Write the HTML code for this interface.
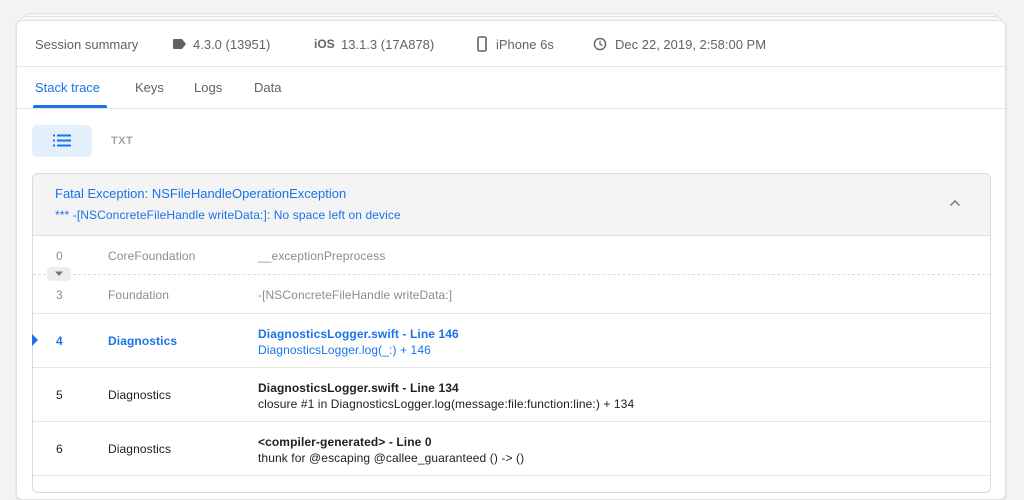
<!DOCTYPE html>
<html><head><style>
*{margin:0;padding:0;box-sizing:border-box}
body{width:1024px;height:485px;overflow:hidden;background:#f1f3f4;font-family:"Liberation Sans",sans-serif;position:relative}
.a{position:absolute;white-space:nowrap}
.card{position:absolute;left:16px;top:20px;width:990px;height:480px;background:#fff;border:1px solid #e0e0e0;border-radius:6px;box-shadow:0 1px 2px rgba(0,0,0,.12)}
.stk{position:absolute;border:1px solid #e2e2e2;border-bottom:none;border-radius:6px 6px 0 0;background:#f8f8f8}
.hd{font-size:13px;color:#5f6368;top:37px}
.tab{font-size:13px;top:80px;color:#5f6368}
.r{font-size:12px;color:#202124;letter-spacing:0.1px}
.g{color:#8a8d91}
.b{font-weight:bold}
.bl{color:#1a73e8}
.hl{position:absolute;left:33px;width:957px;height:1px;background:#e6e6e6}
</style></head><body>
<div class="stk" style="left:24px;top:13px;width:974px;height:10px"></div>
<div class="stk" style="left:20px;top:16px;width:982px;height:10px"></div>
<div class="card"></div>
<div class="a hd" style="left:35px">Session summary</div>
<svg class="a" style="left:173px;top:39px" width="14" height="10"><path d="M0 1a1 1 0 0 1 1-1h8l4 5-4 5H1a1 1 0 0 1-1-1z" fill="#5f6368"/></svg>
<div class="a hd" style="left:193px">4.3.0 (13951)</div>
<div class="a hd" style="left:314px;font-weight:bold;font-size:12px;top:37px;letter-spacing:0">iOS</div>
<div class="a hd" style="left:341px">13.1.3 (17A878)</div>
<svg class="a" style="left:477px;top:36px" width="10" height="16"><rect x="1" y="1" width="8" height="14" rx="1.5" fill="none" stroke="#5f6368" stroke-width="1.6"/></svg>
<div class="a hd" style="left:496px">iPhone 6s</div>
<svg class="a" style="left:593px;top:37px" width="14" height="14"><circle cx="7" cy="7" r="5.6" fill="none" stroke="#5f6368" stroke-width="1.4"/><path d="M7 3.8V7l2.3 1.6" fill="none" stroke="#5f6368" stroke-width="1.3"/></svg>
<div class="a hd" style="left:615px">Dec 22, 2019, 2:58:00 PM</div>
<div class="a" style="left:17px;top:66px;width:988px;height:1px;background:#e6e6e6"></div>
<div class="a tab" style="left:35px;color:#1a73e8">Stack trace</div>
<div class="a tab" style="left:135px">Keys</div>
<div class="a tab" style="left:194px">Logs</div>
<div class="a tab" style="left:254px">Data</div>
<div class="a" style="left:33px;top:105px;width:74px;height:3px;background:#1a73e8;border-radius:2px 2px 0 0"></div>
<div class="a" style="left:17px;top:108px;width:988px;height:1px;background:#e6e6e6"></div>
<div class="a" style="left:32px;top:125px;width:60px;height:32px;background:#e3f0fc;border-radius:5px"></div>
<svg class="a" style="left:53px;top:134px" width="18" height="14"><g fill="#1a73e8"><rect x="0" y="0.5" width="2" height="2"/><rect x="4" y="0.5" width="14" height="2"/><rect x="0" y="5.5" width="2" height="2"/><rect x="4" y="5.5" width="14" height="2"/><rect x="0" y="10.5" width="2" height="2"/><rect x="4" y="10.5" width="14" height="2"/></g></svg>
<div class="a" style="left:111px;top:135px;font-size:11px;font-weight:bold;color:#a0a3a6;letter-spacing:.5px">TXT</div>
<div class="a" style="left:32px;top:173px;width:959px;height:320px;border:1px solid #dadada;border-radius:6px;background:#fff"></div>
<div class="a" style="left:33px;top:174px;width:957px;height:62px;background:#f4f4f4;border-radius:5px 5px 0 0;border-bottom:1px solid #e0e0e0"></div>
<div class="a" style="left:55px;top:186px;font-size:13px;color:#1a73e8">Fatal Exception: NSFileHandleOperationException</div>
<div class="a" style="left:55px;top:208px;font-size:12px;color:#1a73e8;letter-spacing:.1px">*** -[NSConcreteFileHandle writeData:]: No space left on device</div>
<svg class="a" style="left:949px;top:199px" width="12" height="8"><path d="M1.5 6.5l4.5-4.5 4.5 4.5" fill="none" stroke="#80868b" stroke-width="1.6"/></svg>
<div class="a r g" style="left:56px;top:249px">0</div>
<div class="a r g" style="left:108px;top:249px">CoreFoundation</div>
<div class="a r g" style="left:258px;top:249px">__exceptionPreprocess</div>
<div class="a" style="left:33px;top:274px;width:957px;border-top:1px dashed #dcdcdc"></div>
<div class="a" style="left:47px;top:267px;width:24px;height:14px;background:#eceeef;border-radius:4px"></div>
<svg class="a" style="left:54px;top:271px" width="10" height="6"><path d="M1 0.5h8L5 5z" fill="#70757a"/></svg>
<div class="a r g" style="left:56px;top:288px">3</div>
<div class="a r g" style="left:108px;top:288px">Foundation</div>
<div class="a r g" style="left:258px;top:288px">-[NSConcreteFileHandle writeData:]</div>
<div class="hl" style="top:313px"></div>
<svg class="a" style="left:32px;top:334px" width="6" height="12"><path d="M0 0l6 6-6 6z" fill="#1a73e8"/></svg>
<div class="a r b bl" style="left:56px;top:334px">4</div>
<div class="a r b bl" style="left:108px;top:334px">Diagnostics</div>
<div class="a r b bl" style="left:258px;top:327px">DiagnosticsLogger.swift - Line 146</div>
<div class="a r bl" style="left:258px;top:343px">DiagnosticsLogger.log(_:) + 146</div>
<div class="hl" style="top:367px"></div>
<div class="a r" style="left:56px;top:388px">5</div>
<div class="a r" style="left:108px;top:388px">Diagnostics</div>
<div class="a r b" style="left:258px;top:381px">DiagnosticsLogger.swift - Line 134</div>
<div class="a r" style="left:258px;top:397px">closure #1 in DiagnosticsLogger.log(message:file:function:line:) + 134</div>
<div class="hl" style="top:421px"></div>
<div class="a r" style="left:56px;top:442px">6</div>
<div class="a r" style="left:108px;top:442px">Diagnostics</div>
<div class="a r b" style="left:258px;top:435px">&lt;compiler-generated&gt; - Line 0</div>
<div class="a r" style="left:258px;top:451px">thunk for @escaping @callee_guaranteed () -&gt; ()</div>
<div class="hl" style="top:475px"></div>
</body></html>
